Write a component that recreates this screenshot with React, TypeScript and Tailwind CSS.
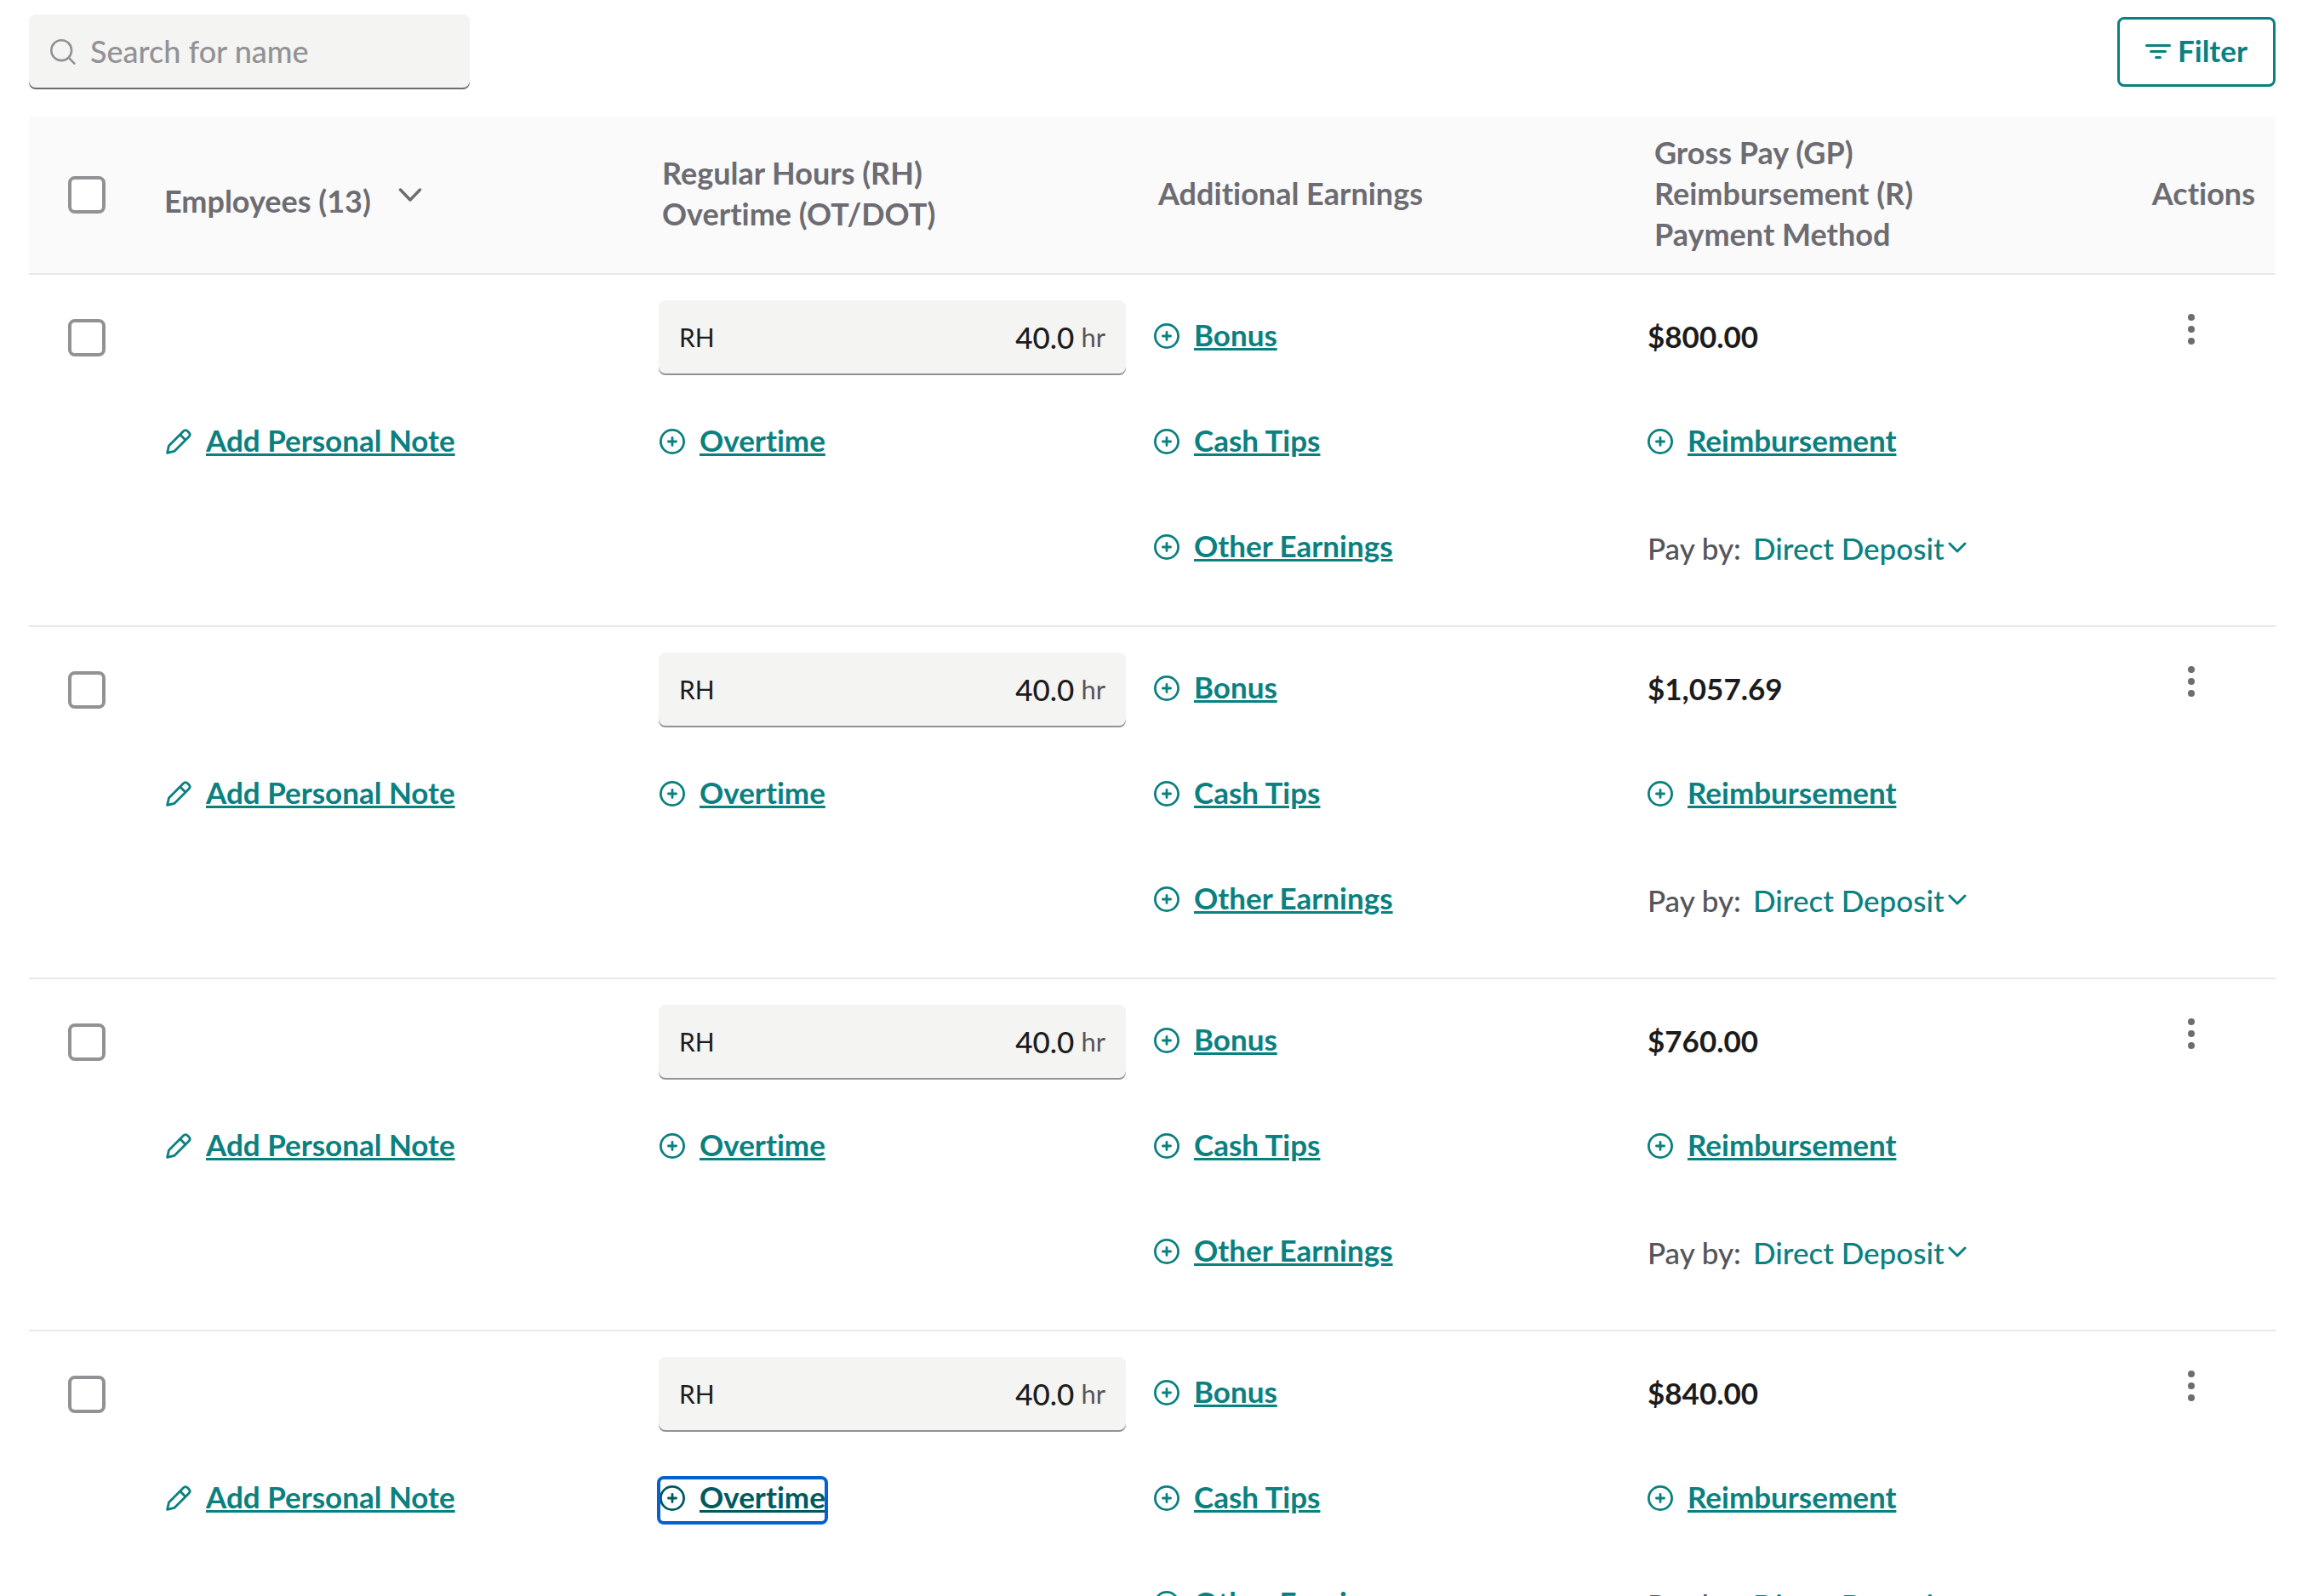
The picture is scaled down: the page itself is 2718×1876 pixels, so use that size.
import type { ReactNode } from "react";

type Employee = { id: number; hours: string; gross: string; overtimeFocused?: boolean };

const employees: Employee[] = [
  { id: 1, hours: "40.0", gross: "$800.00" },
  { id: 2, hours: "40.0", gross: "$1,057.69" },
  { id: 3, hours: "40.0", gross: "$760.00" },
  { id: 4, hours: "40.0", gross: "$840.00", overtimeFocused: true },
];

function PlusCircleIcon() {
  return (
    <svg className="size-[30px] shrink-0" viewBox="0 0 30 30" fill="none" stroke="currentColor" strokeWidth="2.8" strokeLinecap="round" aria-hidden="true">
      <circle cx="15" cy="15" r="13.6" />
      <path d="M10.4 15h9.2M15 10.4v9.2" />
    </svg>
  );
}

function PencilIcon() {
  return (
    <svg className="size-[30px] shrink-0" viewBox="0 0 30 30" fill="none" stroke="currentColor" strokeWidth="2.8" strokeLinejoin="round" aria-hidden="true">
      <path d="M1.6 28.4 3.4 20 20.6 2.8Q23 .4 25.4 2.8L27 4.4Q29.4 6.8 27 9.2L9.8 26.4Z" />
      <path d="m16.6 6.8 6.4 6.4" />
    </svg>
  );
}

function SearchIcon() {
  return (
    <svg className="size-[30px] shrink-0" viewBox="0 0 30 30" fill="none" stroke="currentColor" strokeWidth="2.6" strokeLinecap="round" aria-hidden="true">
      <circle cx="13.2" cy="13.2" r="11.9" />
      <path d="m21.8 21.8 6.6 6.8" />
    </svg>
  );
}

function FilterIcon() {
  return (
    <svg className="size-[30px] shrink-0" viewBox="0 0 30 30" fill="none" stroke="currentColor" strokeWidth="3" strokeLinecap="round" aria-hidden="true">
      <path d="M1.5 7.5h27M6.5 14.5h17M12.5 21.5h5" />
    </svg>
  );
}

function KebabIcon() {
  return (
    <svg className="size-10" viewBox="0 0 40 40" fill="currentColor" aria-hidden="true">
      <circle cx="20" cy="6" r="4" />
      <circle cx="20" cy="20" r="4" />
      <circle cx="20" cy="34" r="4" />
    </svg>
  );
}

function Checkbox({ label }: { label: string }) {
  return (
    <input
      type="checkbox"
      aria-label={label}
      className="block size-11 appearance-none rounded-lg border-4 border-[#929296] bg-white checked:bg-[#0a8080]"
    />
  );
}

function LinkButton({ icon, focused, children }: { icon: ReactNode; focused?: boolean; children: ReactNode }) {
  return (
    <button
      type="button"
      className={
        focused
          ? "relative flex items-center gap-[17px] text-[#005961] after:absolute after:-inset-x-[3px] after:top-0 after:-bottom-[5px] after:rounded-lg after:border-4 after:border-[#0560d2]"
          : "relative flex items-center gap-[17px] text-[#0a8080]"
      }
    >
      {icon}
      <span className="pb-1 text-[35px] leading-[48px] font-bold underline decoration-[3px] underline-offset-[2px]">{children}</span>
    </button>
  );
}

function Slot({ children }: { children?: ReactNode }) {
  return <div className="flex h-[88px] items-center">{children}</div>;
}

function EmployeeRow({ employee }: { employee: Employee }) {
  const hoursId = `hours-${employee.id}`;
  const payId = `pay-${employee.id}`;
  return (
    <tr className="align-top [&>td]:border-b-2 [&>td]:border-[#e8e8e8]">
      <td className="pt-[52px] pl-[46px]">
        <Checkbox label="Select employee" />
      </td>
      <td className="pt-[152px] pl-0.5">
        <Slot>
          <LinkButton icon={<PencilIcon />}>Add Personal Note</LinkButton>
        </Slot>
      </td>
      <td className="pt-[30px] pr-8">
        <div className="flex h-[88px] items-center justify-between rounded-lg bg-[#f4f4f2] px-6 pb-0.5 shadow-[inset_0_-2px_0_#929296]">
          <label htmlFor={hoursId} className="text-[30px] text-[#1c1c1c]">RH</label>
          <div className="flex items-center gap-2">
            <input id={hoursId} defaultValue={employee.hours} className="w-20 bg-transparent text-right text-[35px] font-medium text-[#1c1c1c] outline-none" />
            <span className="text-[31px] text-[#55555a]">hr</span>
          </div>
        </div>
        <div className="mt-[34px] pl-px">
          <Slot>
            <LinkButton icon={<PlusCircleIcon />} focused={employee.overtimeFocused}>Overtime</LinkButton>
          </Slot>
        </div>
      </td>
      <td className="pt-7 pb-12 pl-px">
        <div className="flex flex-col gap-9">
          <Slot><LinkButton icon={<PlusCircleIcon />}>Bonus</LinkButton></Slot>
          <Slot><LinkButton icon={<PlusCircleIcon />}>Cash Tips</LinkButton></Slot>
          <Slot><LinkButton icon={<PlusCircleIcon />}>Other Earnings</LinkButton></Slot>
        </div>
      </td>
      <td className="pt-7">
        <div className="flex flex-col gap-9">
          <Slot><span className="text-[35px] font-bold text-[#1c1c1c]">{employee.gross}</span></Slot>
          <Slot><LinkButton icon={<PlusCircleIcon />}>Reimbursement</LinkButton></Slot>
          <Slot>
            <div className="flex items-center pt-0.5 text-[35px]">
              <label htmlFor={payId} className="pr-3.5 font-medium text-[#55555a]">Pay by:</label>
              <select id={payId} className="appearance-none bg-transparent font-medium text-[#0a8080] outline-none [field-sizing:content]">
                <option>Direct Deposit</option>
              </select>
              <svg className="ml-1 h-3.5 w-[22px] text-[#0a8080]" viewBox="0 0 22 14" fill="none" stroke="currentColor" strokeWidth="3" strokeLinecap="round" strokeLinejoin="round" aria-hidden="true">
                <path d="m2 2 9 9 9-9" />
              </svg>
            </div>
          </Slot>
        </div>
      </td>
      <td className="pt-10 pl-[34px]">
        <button type="button" aria-label="Row actions" className="flex size-12 items-center justify-center text-[#6c6c72]">
          <KebabIcon />
        </button>
      </td>
    </tr>
  );
}

export default function App() {
  return (
    <main className="h-screen overflow-hidden bg-white pt-[17px] pr-11 pl-[34px] font-[Lato,sans-serif] [font-variant-ligatures:none]">
      <div className="mb-8 flex items-center justify-between">
        <label className="flex h-[88px] w-[518px] items-center gap-[17px] rounded-lg bg-[#f4f4f2] px-[25px] text-[#929296] shadow-[inset_0_-2px_0_#6c6c72]">
          <SearchIcon />
          <input
            type="text"
            aria-label="Search for name"
            placeholder="Search for name"
            className="min-w-0 flex-1 bg-transparent pb-0.5 text-[36px] font-medium text-[#1c1c1c] outline-none placeholder:text-[#929296]"
          />
        </label>
        <button type="button" className="flex h-[82px] items-center gap-2 rounded-lg border-[3px] border-[#0a8080] px-[30px] text-[#0a8080]">
          <FilterIcon />
          <span className="pb-1 text-[35px] font-bold">Filter</span>
        </button>
      </div>

      <table className="w-full table-fixed border-separate border-spacing-0">
        <colgroup>
          <col className="w-[159px]" />
          <col />
          <col />
          <col />
          <col />
          <col className="w-[157px]" />
        </colgroup>
        <thead>
          <tr className="h-[186px] bg-[#fafafa] text-left text-[36px] leading-[48px] text-[#6c6c72] [&>th]:border-b-2 [&>th]:border-[#e8e8e8] [&>th]:font-bold">
            <th scope="col" className="pl-[46px]">
              <Checkbox label="Select all employees" />
            </th>
            <th scope="col">
              <button type="button" className="flex items-center gap-8 font-bold">
                <span className="pt-3.5">Employees (13)</span>
                <svg className="h-4 w-7" viewBox="0 0 28 16" fill="none" stroke="currentColor" strokeWidth="3.4" strokeLinecap="round" strokeLinejoin="round" aria-hidden="true">
                  <path d="m2.5 2 11.5 12L25.5 2" />
                </svg>
              </button>
            </th>
            <th scope="col" className="pb-1 pl-1">
              Regular Hours (RH)
              <br />
              Overtime (OT/DOT)
            </th>
            <th scope="col" className="pb-1 pl-1.5">Additional Earnings</th>
            <th scope="col" className="pb-1 pl-2">
              Gross Pay (GP)
              <br />
              Reimbursement (R)
              <br />
              Payment Method
            </th>
            <th scope="col" className="pr-6 pb-1 text-right">Actions</th>
          </tr>
        </thead>
        <tbody>
          {employees.map((employee) => (
            <EmployeeRow key={employee.id} employee={employee} />
          ))}
        </tbody>
      </table>
    </main>
  );
}
